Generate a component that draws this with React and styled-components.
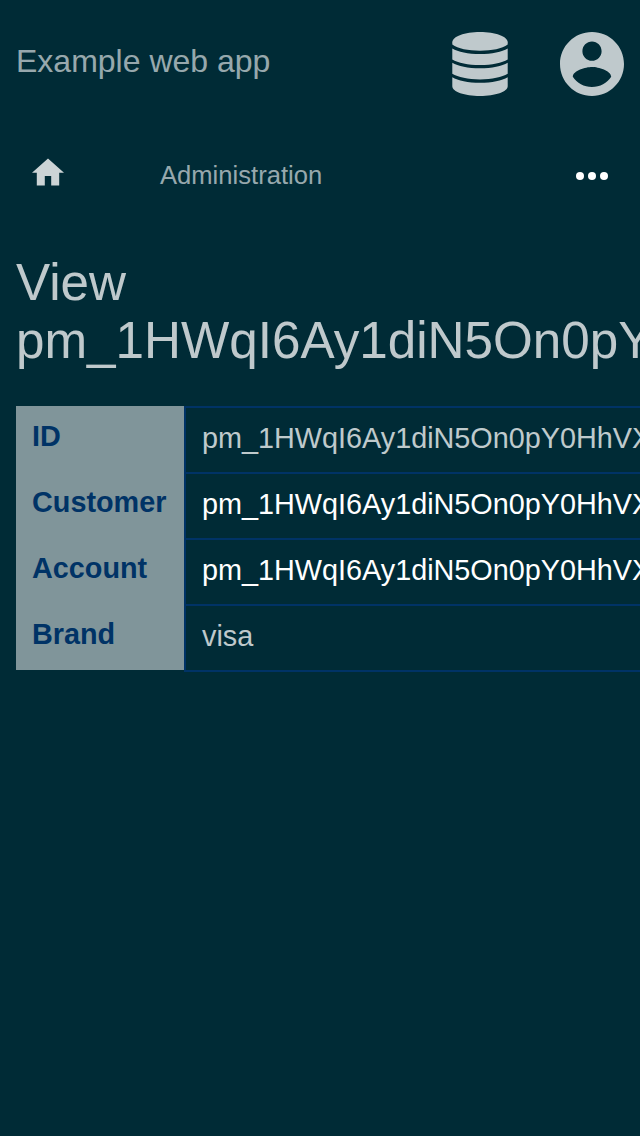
import React from 'react';
import styled, { createGlobalStyle } from 'styled-components';

const GlobalStyle = createGlobalStyle`
  * { box-sizing: border-box; }
  html, body { margin: 0; height: 100%; background: #002b36; overflow: hidden; }
  body { font-family: "Liberation Sans", Arial, sans-serif; }
`;

const Page = styled.div`
  width: 100%;
  height: 1136px;
  overflow: hidden;
  color: rgba(255, 255, 255, 0.75);
`;

const Header = styled.header`
  display: flex;
  justify-content: space-between;
  height: 128px;
  padding: 32px 16px;
`;

const AppTitle = styled.div`
  font-size: 32px;
  line-height: 58px;
  color: rgba(255, 255, 255, 0.6);
`;

const HeaderIcons = styled.div`
  display: flex;
  gap: 48px;
`;

const Icon = styled.svg`
  display: block;
  flex: none;
  width: ${(p) => p.$w}px;
  height: ${(p) => p.$h}px;
  fill: currentColor;
`;

const NavBar = styled.nav`
  display: flex;
  align-items: center;
  height: 96px;
  padding: 0 32px;
`;

const HomeLink = styled.span`
  width: 128px;
  padding-bottom: 8px;
  color: rgba(255, 255, 255, 0.8);
`;

const NavLabel = styled.span`
  flex: 1;
  padding-bottom: 2px;
  font-size: 25.6px;
  line-height: 30px;
  color: rgba(255, 255, 255, 0.6);
`;

const MoreButton = styled.span`
  color: #fff;
`;

const Main = styled.main`
  padding: 30px 16px;
`;

const Heading = styled.h1`
  margin: 0 0 36px;
  font-size: 51.2px;
  font-weight: 400;
  line-height: 58px;
`;

const Table = styled.div`
  display: grid;
  grid-template-columns: 168px max-content;
  font-size: 28.8px;
`;

const Labels = styled.div`
  height: 264px;
  background: #80959a;
`;

const Label = styled.div`
  height: 66px;
  padding-left: 16px;
  line-height: 61px;
  font-weight: 700;
  color: #003366;
`;

const Values = styled.div`
  border: 2px solid #003366;
  border-bottom: 0;
`;

const Value = styled.div`
  height: 66px;
  padding: 0 16px;
  line-height: 61px;
  border-bottom: 2px solid #003366;
  white-space: nowrap;
  color: ${(p) => (p.$link ? '#fff' : 'inherit')};
`;

const ID = 'pm_1HWqI6Ay1diN5On0pY0HhVXX';

const rows = [
  { label: 'ID', value: ID },
  { label: 'Customer', value: ID, link: true },
  { label: 'Account', value: ID, link: true },
  { label: 'Brand', value: 'visa' },
];

export default function App() {
  return (
    <Page>
      <GlobalStyle />
      <Header>
        <AppTitle>Example web app</AppTitle>
        <HeaderIcons>
          <Icon $w={64} $h={64} viewBox="0 0 64 64">
            <path d="M32 0C47.300 0 59.700 4.600 59.700 10.200V12.600C54 16.800 44 18.800 32 18.800S10 16.800 4.300 12.600V10.200C4.300 4.600 16.700 0 32 0Z" />
            <path d="M4.300 16.500C10 20 20 22 32 22S54 20 59.700 16.500V27.500C54 31 44 33 32 33S10 31 4.300 27.500Z" />
            <path d="M4.300 30.800C10 34.300 20 36.300 32 36.300S54 34.300 59.700 30.800V41.800C54 45.300 44 47.400 32 47.400S10 45.300 4.300 41.800Z" />
            <path d="M4.300 45.200C10 48.700 20 50.700 32 50.700S54 48.700 59.700 45.200V54.200C59.700 59.600 47.300 64 32 64S4.300 59.600 4.300 54.200Z" />
          </Icon>
          <Icon $w={64} $h={64} viewBox="2 2 20 20">
            <path d="M12 2C6.480 2 2 6.480 2 12s4.480 10 10 10 10-4.480 10-10S17.520 2 12 2zm0 3c1.660 0 3 1.340 3 3s-1.340 3-3 3-3-1.340-3-3 1.340-3 3-3zm0 14.200c-2.500 0-4.710-1.280-6-3.220.03-1.990 4-3.080 6-3.080 1.990 0 5.970 1.090 6 3.080-1.290 1.940-3.500 3.220-6 3.220z" />
          </Icon>
        </HeaderIcons>
      </Header>
      <NavBar>
        <HomeLink>
          <Icon $w={32} $h={28} viewBox="2 2.75 20 17.5">
            <path d="M10 20v-6h4v6h5v-8h3L12 3 2 12h3v8z" />
          </Icon>
        </HomeLink>
        <NavLabel>Administration</NavLabel>
        <MoreButton>
          <Icon $w={32} $h={8} viewBox="0 0 32 8">
            <circle cx="4" cy="4" r="4" />
            <circle cx="16" cy="4" r="4" />
            <circle cx="28" cy="4" r="4" />
          </Icon>
        </MoreButton>
      </NavBar>
      <Main>
        <Heading>View {ID}</Heading>
        <Table>
          <Labels>
            {rows.map((r) => (
              <Label key={r.label}>{r.label}</Label>
            ))}
          </Labels>
          <Values>
            {rows.map((r) => (
              <Value key={r.label} $link={r.link}>{r.value}</Value>
            ))}
          </Values>
        </Table>
      </Main>
    </Page>
  );
}
